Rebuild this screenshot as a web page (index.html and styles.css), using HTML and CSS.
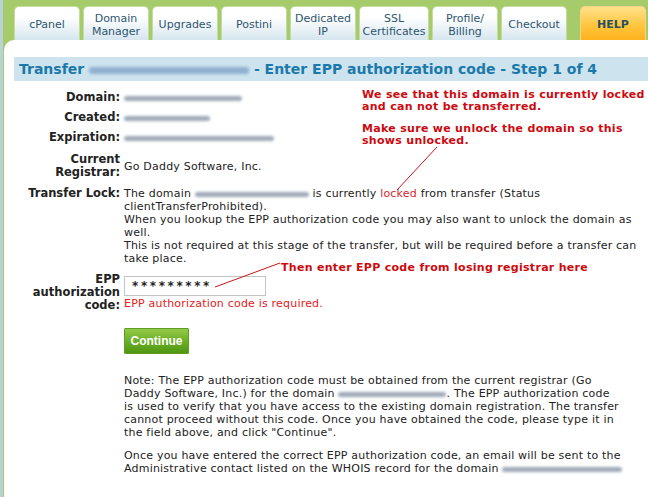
FILE: index.html
```html
<!DOCTYPE html>
<html lang="en">
<head>
    <meta charset="UTF-8">
    <title>Transfer - Enter EPP authorization code</title>
    <link rel="stylesheet" href="styles.css">
</head>
<body>
    <div class="shell">
        <nav class="tabs">
            <a class="tab">cPanel</a>
            <a class="tab">Domain<br>Manager</a>
            <a class="tab">Upgrades</a>
            <a class="tab">Postini</a>
            <a class="tab">Dedicated<br>IP</a>
            <a class="tab wide">SSL<br>Certificates</a>
            <a class="tab">Profile/<br>Billing</a>
            <a class="tab">Checkout</a>
            <a class="tab help">HELP</a>
        </nav>

        <main class="panel">
            <h1 class="title">Transfer <span class="smear title-smear"></span> - Enter EPP authorization code - Step 1 of 4</h1>

            <div class="form">
                <div class="label">Domain:</div>
                <div class="value"><span class="smear" style="width: 118px"></span></div>

                <div class="label">Created:</div>
                <div class="value"><span class="smear" style="width: 86px"></span></div>

                <div class="label">Expiration:</div>
                <div class="value"><span class="smear" style="width: 150px"></span></div>

                <div class="label push-2">Current<br>Registrar:</div>
                <div class="value mid push-2">Go Daddy Software, Inc.</div>

                <div class="label push-1">Transfer Lock:</div>
                <div class="value push-1">
                    The domain <span class="smear" style="width: 114px"></span> is currently <span class="locked">locked</span> from transfer (Status<br>
                    clientTransferProhibited).<br>
                    When you lookup the EPP authorization code you may also want to unlock the domain as<br>
                    well.<br>
                    This is not required at this stage of the transfer, but will be required before a transfer can<br>
                    take place.
                </div>

                <div class="label epp">EPP<br>authorization<br>code:</div>
                <div class="value epp">
                    <div class="code-input">*********</div>
                    <div class="error">EPP authorization code is required.</div>
                </div>

                <div></div>
                <div class="value">
                    <button class="continue">Continue</button>
                </div>

                <div></div>
                <div class="value notes">
                    <p>Note: The EPP authorization code must be obtained from the current registrar (Go<br>
                    Daddy Software, Inc.) for the domain <span class="smear" style="width: 108px"></span>. The EPP authorization code<br>
                    is used to verify that you have access to the existing domain registration. The transfer<br>
                    cannot proceed without this code. Once you have obtained the code, please type it in<br>
                    the field above, and click "Continue".</p>
                    <p>Once you have entered the correct EPP authorization code, an email will be sent to the<br>
                    Administrative contact listed on the WHOIS record for the domain <span class="smear" style="width: 120px"></span></p>
                </div>
            </div>

            <div class="note note-lock">
                <div>We see that this domain is currently locked<br>and can not be transferred.</div>
                <div>Make sure we unlock the domain so this<br>shows unlocked.</div>
            </div>
            <div class="note note-code">Then enter EPP code from losing registrar here</div>

            <svg class="pointers" width="644" height="457">
                <line x1="433" y1="107" x2="393" y2="150" stroke="#c8141c" stroke-width="1"/>
                <line x1="276" y1="223" x2="211" y2="247" stroke="#c8141c" stroke-width="1"/>
            </svg>
        </main>
    </div>
</body>
</html>
```

FILE: styles.css
```css
body, html {
    margin: 0;
    padding: 0;
    height: 100%;
    overflow: hidden;
    font-family: "DejaVu Sans", Verdana, sans-serif;
    font-size: 11px;
    color: #222;
    background: #a6cb6b;
}
.shell {
    height: 100%;
    border-left: 3px solid #b8d2d6;
    padding-left: 1px;
    display: flex;
    flex-direction: column;
}
.tabs {
    display: flex;
    align-items: flex-end;
    gap: 3px;
    padding: 6px 0 0 10px;
    height: 34px;
}
.tab {
    width: 66px;
    height: 34px;
    box-sizing: border-box;
    display: flex;
    align-items: center;
    justify-content: center;
    text-align: center;
    line-height: 13px;
    color: #2f5670;
    background: linear-gradient(#ffffff, #ffffff 30%, #d6e6ef);
    border: 1px solid #c4dc9e;
    border-bottom: none;
    border-radius: 5px 5px 0 0;
    padding-top: 2px;
}
.tab.wide {
    width: 70px;
}
.tab.help {
    margin-left: 10px;
    font-weight: bold;
    color: #28505e;
    background: linear-gradient(#ffe18a, #ffc43a 60%, #ffb11e);
    border-color: #f5d48a;
}
.panel {
    position: relative;
    flex: 1;
    background: #fff;
    border-top-left-radius: 10px;
    padding: 17px 0 0 10px;
}
.title {
    margin: 0;
    height: 24px;
    line-height: 25px;
    padding-left: 5px;
    font-size: 14px;
    font-weight: bold;
    color: #1b79aa;
    background: #cde3ee;
    white-space: nowrap;
}
.smear {
    display: inline-block;
    height: 5px;
    vertical-align: middle;
    background: #9ea8b8;
    border-radius: 3px;
    filter: blur(1.4px);
}
.title-smear {
    width: 160px;
    height: 7px;
    background: #8fb0d0;
}
.form {
    display: grid;
    grid-template-columns: 106px 1fr;
    column-gap: 4px;
    row-gap: 7px;
    margin-top: 10px;
    line-height: 13px;
}
.push-1 {
    margin-top: 1px;
}
.push-2 {
    margin-top: 2px;
}
.label {
    text-align: right;
    font-weight: bold;
    font-size: 11.5px;
    white-space: nowrap;
}
.value {
    white-space: nowrap;
    letter-spacing: 0.2px;
}
.value.mid {
    align-self: center;
}
.locked {
    color: #d8262c;
}
.label.epp, .value.epp {
    margin-top: 1px;
}
.code-input {
    width: 133px;
    height: 18px;
    border: 1px solid #c4c4c4;
    line-height: 18px;
    padding-left: 7px;
    letter-spacing: 2.6px;
    font-weight: bold;
    margin-top: 3px;
    font-size: 12px;
}
.error {
    color: #e3201c;
    margin-top: 1px;
}
.continue {
    margin-top: 9px;
    width: 65px;
    height: 26px;
    border: 1px solid #5f9e22;
    border-radius: 1px;
    background: linear-gradient(#94c94a, #6cb027 50%, #4f9612);
    color: #fff;
    font-family: "Liberation Sans", Arial, sans-serif;
    font-weight: bold;
    font-size: 12px;
    letter-spacing: 0;
    padding: 0;
}
.notes {
    padding-top: 13px;
}
.notes p {
    margin: 0 0 10px;
}
.note {
    position: absolute;
    display: flex;
    flex-direction: column;
    gap: 10px;
    color: #cc0a10;
    font-weight: bold;
    font-size: 11px;
    line-height: 12px;
    letter-spacing: 0.3px;
    white-space: nowrap;
}
.note-lock {
    left: 358px;
    top: 49px;
}
.note-code {
    left: 277px;
    top: 222px;
}
.pointers {
    position: absolute;
    left: 0;
    top: 0;
    pointer-events: none;
}
```
